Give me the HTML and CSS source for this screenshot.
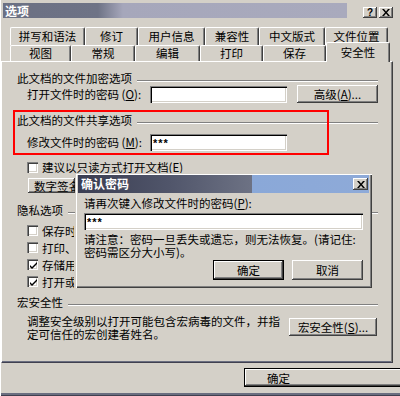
FILE: index.html
```html
<!DOCTYPE html>
<html lang="zh-CN">
<head>
<meta charset="utf-8">
<title>选项</title>
<link rel="stylesheet" href="styles.css">
</head>
<body>
<div class="window">
  <div class="titlebar">
    <span class="title">选项</span>
    <div class="caption-btns">
      <span class="cbtn raised">?</span>
      <span class="cbtn raised">
        <svg width="8" height="7" viewBox="0 0 8 7"><path d="M0 0h2l2 2.5L6 0h2L5 3.5 8 7H6L4 4.5 2 7H0l3-3.5z" fill="#000"/></svg>
      </span>
    </div>
  </div>

  <div class="tabs">
    <div class="tabrow back">
      <span class="tab w75">拼写和语法</span>
      <span class="tab w53">修订</span>
      <span class="tab w67">用户信息</span>
      <span class="tab w54">兼容性</span>
      <span class="tab w66">中文版式</span>
      <span class="tab w63">文件位置</span>
    </div>
    <div class="tabrow front">
      <span class="tab w61">视图</span>
      <span class="tab w64">常规</span>
      <span class="tab w65">编辑</span>
      <span class="tab w63">打印</span>
      <span class="tab w63">保存</span>
      <span class="tab w64 selected">安全性</span>
    </div>
  </div>

  <div class="panel">
    <div class="head h1"><span>此文档的文件加密选项</span><i class="rule"></i></div>
    <div class="field-row">
      <span class="field-label">打开文件时的密码 (<u>O</u>):</span>
      <span class="input"></span>
      <span class="button raised btn-adv">高级(<u>A</u>)...</span>
    </div>

    <div class="head h2"><span>此文档的文件共享选项</span><i class="rule"></i></div>
    <div class="field-row r2">
      <span class="field-label">修改文件时的密码 (<u>M</u>):</span>
      <span class="input">***</span>
    </div>

    <div class="check-row ro"><span class="cb"></span>建议以只读方式打开文档(<u>E</u>)</div>
    <div class="button raised btn-sig">数字签名...</div>

    <div class="head h3"><span>隐私选项</span><i class="rule"></i></div>
    <div class="privacy">
      <div class="check-row clip"><span class="cb"></span>保存时从文件属性中删除个人信息(<u>R</u>)</div>
      <div class="check-row clip"><span class="cb"></span>打印、保存或发送包含修订或批注的文件之前给出警告(<u>W</u>)</div>
      <div class="check-row clip"><span class="cb"><svg width="9" height="9" viewBox="0 0 9 9"><path d="M1 4l2 2 5-5v2L3 8 1 6z" fill="#000"/></svg></span>存储用于增强合并精确性的随机编号(<u>Y</u>)</div>
      <div class="check-row clip"><span class="cb"><svg width="9" height="9" viewBox="0 0 9 9"><path d="M1 4l2 2 5-5v2L3 8 1 6z" fill="#000"/></svg></span>打开或保存时标记可见(<u>V</u>)</div>
    </div>

    <div class="head h4"><span>宏安全性</span><i class="rule"></i></div>
    <div class="macro">
      <p class="macro-text">调整安全级别以打开可能包含宏病毒的文件，并指<br>定可信任的宏创建者姓名。</p>
      <span class="button raised btn-macro">宏安全性(<u>S</u>)...</span>
    </div>

    <div class="redbox"></div>
  </div>

  <div class="footer">
    <span class="button default ok-main">确定</span>
  </div>

  <div class="dialog">
    <div class="dlg-title">
      <span class="dlg-title-text">确认密码</span>
      <span class="cbtn raised dlg-close">
        <svg width="8" height="7" viewBox="0 0 8 7"><path d="M0 0h2l2 2.5L6 0h2L5 3.5 8 7H6L4 4.5 2 7H0l3-3.5z" fill="#000"/></svg>
      </span>
    </div>
    <div class="dlg-body">
      <div class="dlg-label">请再次键入修改文件时的密码(<u>P</u>):</div>
      <div class="input dlg-input">***</div>
      <p class="dlg-note">请注意：密码一旦丢失或遗忘，则无法恢复。(请记住:<br>密码需区分大小写)。</p>
      <div class="dlg-buttons">
        <span class="button default dlg-btn">确定</span>
        <span class="button raised dlg-btn">取消</span>
      </div>
    </div>
  </div>
</div>
</body>
</html>
```

FILE: styles.css
```css
* { box-sizing: border-box; }

html, body {
  margin: 0;
  padding: 0;
  background: #d4d0c8;
}

body {
  font-family: "Noto Sans CJK SC", "Liberation Sans", sans-serif;
  font-size: 11.5px;
  color: #000;
}

u { text-decoration: underline; }

.window {
  position: relative;
  width: 400px;
  height: 396px;
  overflow: hidden;
  background: #d4d0c8;
  border-left: 1px solid #fff;
  box-shadow: inset 0 -1px 0 #404050, inset 0 -3px 0 #6a6e80;
}

/* ---------- title bar ---------- */
.titlebar {
  height: 15px;
  margin: 3px 3px 0 2px;
  display: flex;
  justify-content: space-between;
  align-items: flex-end;
  background: linear-gradient(to right, #6b7083 0, #6e7386 95px, #a6a7bb 120px, #a9aabd 344px, #d4d0c8 344px);
}

.title {
  align-self: center;
  padding-left: 2px;
  color: #fff;
  font-weight: bold;
  font-size: 12px;
  line-height: 15px;
}

.caption-btns {
  display: flex;
  gap: 2px;
  padding-right: 4px;
}

.cbtn {
  width: 14px;
  height: 11px;
  display: flex;
  align-items: center;
  justify-content: center;
  font-family: "Liberation Sans", sans-serif;
  font-weight: bold;
  font-size: 10px;
  line-height: 11px;
}

.raised {
  background: #d4d0c8;
  box-shadow: inset -1px -1px 0 #404040, inset 1px 1px 0 #fff, inset -2px -2px 0 #808080;
}

/* ---------- tabs ---------- */
.tabs {
  margin-top: 9px;
  padding-left: 9px;
}

.tabrow { display: flex; }
.tabrow.back { height: 18px; }
.tabrow.front { height: 16px; align-items: flex-end; }

.tab {
  height: 100%;
  text-align: center;
  border-top: 1px solid #fff;
  border-left: 1px solid #fff;
  border-right: 1px solid #404040;
  border-radius: 2px 2px 0 0;
  box-shadow: inset -1px 0 0 #808080;
  background: #d4d0c8;
}

.back .tab { line-height: 16px; }
.front .tab { line-height: 15px; }

.tab.selected {
  position: relative;
  top: 1px;
  z-index: 2;
  height: 20px;
  line-height: 19px;
}

.w53 { width: 53px; }
.w54 { width: 54px; }
.w61 { width: 61px; }
.w63 { width: 63px; }
.w64 { width: 64px; }
.w65 { width: 65px; }
.w66 { width: 66px; }
.w67 { width: 67px; }
.w75 { width: 75px; }

/* ---------- panel ---------- */
.panel {
  position: relative;
  width: 392px;
  height: 302px;
  padding: 0 14px 0 15px;
  border-top: 1px solid #fff;
  border-left: 1px solid #fff;
  border-right: 1px solid #404040;
  border-bottom: 1px solid #404050;
  box-shadow: inset -1px 0 0 #808080, inset 0 -1px 0 #6a6e80;
}

.head {
  display: flex;
  align-items: center;
  height: 14px;
  line-height: 14px;
  white-space: nowrap;
}

.rule {
  flex: 1;
  height: 2px;
  margin: 5px 0 0 5px;
  border-top: 1px solid #808080;
  border-bottom: 1px solid #fff;
}

.h1 { margin-top: 9px; }
.h2 { margin-top: 10px; }
.h3 { margin-top: 10px; }
.h4 { margin-top: 5px; }

.field-row {
  display: flex;
  align-items: center;
  height: 18px;
  padding-left: 10px;
}

.field-row.r2 { margin-top: 6px; }

.field-label {
  width: 123px;
  white-space: nowrap;
}

.input {
  display: block;
  width: 137px;
  height: 17px;
  padding: 2px 0 0 3px;
  background: #fff;
  font-family: "Liberation Sans", sans-serif;
  font-weight: bold;
  font-size: 11px;
  line-height: 14px;
  letter-spacing: 1px;
  box-shadow: inset 1px 1px 0 #808080, inset 2px 2px 0 #000, inset -1px -1px 0 #fff, inset -2px -2px 0 #d4d0c8;
}

.button {
  display: flex;
  align-items: center;
  justify-content: center;
  white-space: nowrap;
}

.btn-adv {
  width: 81px;
  height: 18px;
  margin-left: 10px;
}

.check-row {
  display: flex;
  align-items: center;
  height: 17px;
  padding-left: 10px;
  white-space: nowrap;
}

.check-row.clip {
  width: 57px;
  overflow: hidden;
}

.check-row.ro {
  height: 14px;
  margin-top: 9px;
}

.cb {
  width: 11px;
  height: 11px;
  margin-right: 4px;
  flex: none;
  display: flex;
  align-items: center;
  justify-content: center;
  background: #fff;
  box-shadow: inset 1px 1px 0 #808080, inset 2px 2px 0 #404040, inset -1px -1px 0 #fff, inset -2px -2px 0 #d4d0c8;
}

.cb svg { margin: 1px 0 0 1px; }

.btn-sig {
  width: 47px;
  height: 15px;
  margin: 4px 0 0 11px;
  justify-content: flex-start;
  padding-left: 6px;
  overflow: hidden;
}

.privacy { margin-top: 5px; }

.macro {
  display: flex;
  align-items: flex-start;
  margin-top: 6px;
  padding-left: 10px;
}

.macro-text {
  margin: 0;
  width: 262px;
  line-height: 13px;
  white-space: nowrap;
}

.btn-macro {
  width: 88px;
  height: 18px;
  margin-top: 3px;
}

.redbox {
  position: absolute;
  left: 11px;
  top: 48px;
  width: 316px;
  height: 45px;
  border: 2px solid #f00;
  pointer-events: none;
}

/* ---------- footer ---------- */
.footer {
  padding: 5px 0 0 243px;
}

.ok-main {
  width: 170px;
  height: 19px;
  justify-content: flex-start;
  padding-left: 23px;
}

.default {
  background: #d4d0c8;
  box-shadow: inset 0 0 0 1px #000, inset -2px -2px 0 #404040, inset 2px 2px 0 #fff, inset -3px -3px 0 #808080;
}

/* ---------- confirm dialog ---------- */
.dialog {
  position: absolute;
  left: 74px;
  top: 173px;
  width: 297px;
  height: 115px;
  padding: 2px 3px 0 3px;
  background: #d4d0c8;
  z-index: 5;
  box-shadow: inset 1px 1px 0 #d4d0c8, inset 2px 2px 0 #fff, inset -1px -1px 0 #404040, inset -2px -2px 0 #808080;
}

.dlg-title {
  height: 18px;
  display: flex;
  align-items: center;
  justify-content: space-between;
  padding: 0 1px 0 3px;
  background: linear-gradient(to right, #3a3d51 0, #50556a 90px, #6d7284 174px, #8aa8d8 174px, #8eaad8 100%);
}

.dlg-title-text {
  color: #fff;
  font-weight: bold;
  font-size: 12px;
  line-height: 18px;
}

.dlg-close {
  width: 15px;
  height: 12px;
}

.dlg-body {
  padding: 0 6px;
}

.dlg-label {
  margin-top: 3px;
  line-height: 14px;
  white-space: nowrap;
}

.dlg-input {
  width: 279px;
  margin-top: 3px;
}

.dlg-note {
  margin: 3px 0 0 0;
  line-height: 13px;
  white-space: nowrap;
}

.dlg-buttons {
  display: flex;
  justify-content: flex-end;
  gap: 8px;
  margin-top: 1px;
}

.dlg-btn {
  width: 71px;
  height: 20px;
}
```
